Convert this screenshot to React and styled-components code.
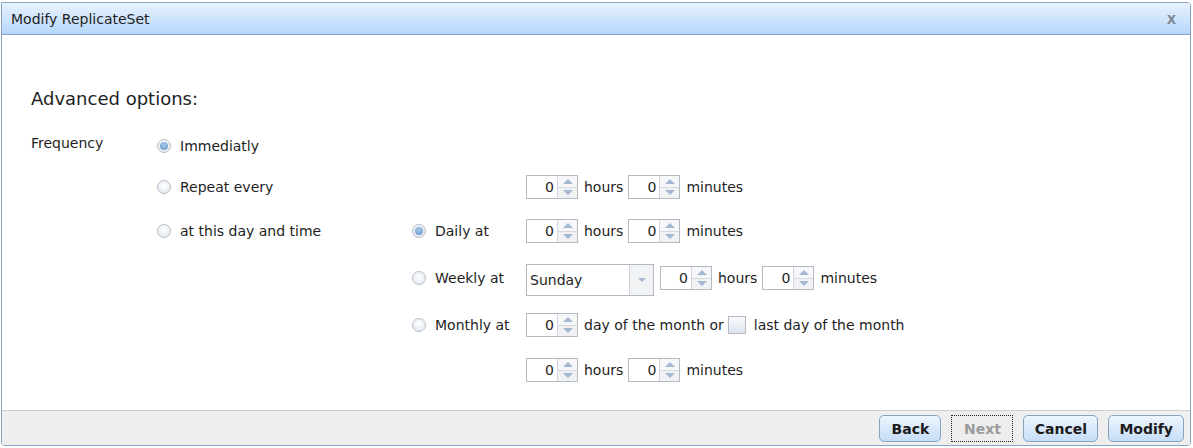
import React from 'react'
import styled, { createGlobalStyle } from 'styled-components'

const GlobalStyle = createGlobalStyle`
  html, body { margin: 0; padding: 0; background: #fff; }
  body { font-family: "DejaVu Sans", Verdana, sans-serif; color: #1e1e1e; }
`

const Page = styled.div`
  width: 1193px;
  height: 448px;
  padding: 2px 2px 0 1px;
  box-sizing: border-box;
  background: #fff;
`

const Dialog = styled.div`
  height: 444px;
  box-sizing: border-box;
  border: 1px solid #86a6c6;
  border-radius: 0 4px 4px 4px;
  display: flex;
  flex-direction: column;
  overflow: hidden;
  background: #fff;
`

const TitleBar = styled.div`
  height: 31px;
  flex: none;
  display: flex;
  align-items: center;
  justify-content: space-between;
  padding: 0 14px 0 9px;
  background: linear-gradient(#e9f3fe, #b5d6fa);
  border-bottom: 1px solid #86a6c6;
  font-size: 14px;
`

const Close = styled.span`
  font-size: 16px;
  font-weight: bold;
  color: #7d848c;
  font-family: "Liberation Sans", Arial, sans-serif;
`

const Body = styled.div`
  flex: 1;
  padding: 53px 29px 0 29px;
`

const Heading = styled.div`
  font-size: 18px;
  line-height: 22px;
  margin-bottom: 16px;
`

const Form = styled.div`
  display: grid;
  grid-template-columns: 126px 255px 114px 1fr;
  grid-template-rows: 40px 42px 46px 48px 46px 44px;
  font-size: 14px;
`

const FieldLabel = styled.div`
  grid-column: 1;
  grid-row: 1;
  align-self: start;
  padding-top: 8px;
  line-height: 18px;
`

const Choice = styled.label`
  grid-column: ${p => p.$col};
  grid-row: ${p => p.$row};
  display: flex;
  align-items: center;
  gap: 9px;
  line-height: 18px;
`

const Radio = styled.span`
  width: 14px;
  height: 14px;
  box-sizing: border-box;
  border-radius: 50%;
  border: 1px solid #b9bfc6;
  background: radial-gradient(circle at 50% 40%, #ffffff, #dde4ec);
  display: flex;
  align-items: center;
  justify-content: center;
  &::after {
    content: '';
    display: ${p => (p.$checked ? 'block' : 'none')};
    width: 8px;
    height: 8px;
    border-radius: 50%;
    background: radial-gradient(circle at 50% 35%, #a9c9ea, #5f94c8);
  }
`

const Controls = styled.div`
  grid-column: 4;
  grid-row: ${p => p.$row};
  display: flex;
  align-items: center;
  gap: 5px;
  line-height: 18px;
`

const SpinBox = styled.div`
  width: 52px;
  height: 24px;
  box-sizing: border-box;
  border: 1px solid #b5bac2;
  display: flex;
  background: #fff;
  margin-right: 1px;
`

const SpinValue = styled.div`
  flex: 1;
  text-align: right;
  padding-right: 3px;
  line-height: 22px;
`

const SpinButtons = styled.div`
  width: 19px;
  border-left: 1px solid #d2d6dc;
  display: flex;
  flex-direction: column;
`

const SpinHalf = styled.div`
  flex: 1;
  background: ${p => (p.$down ? '#f1f2f4' : '#f6f7f8')};
  border-top: ${p => (p.$down ? '1px solid #d6dae0' : 'none')};
  display: flex;
  align-items: center;
  justify-content: center;
  &::after {
    content: '';
    width: 0;
    height: 0;
    border-left: 5px solid transparent;
    border-right: 5px solid transparent;
    ${p => (p.$down ? 'border-top: 5px solid #a5b8d3;' : 'border-bottom: 5px solid #a5b8d3;')}
  }
`

const Select = styled.div`
  width: 128px;
  height: 32px;
  box-sizing: border-box;
  border: 1px solid #b5bac2;
  display: flex;
  margin-top: 4px;
  margin-right: 1px;
`

const SelectText = styled.div`
  flex: 1;
  padding-left: 3px;
  line-height: 30px;
`

const SelectArrow = styled.div`
  width: 23px;
  border-left: 1px solid #d2d6dc;
  background: #f1f2f4;
  display: flex;
  align-items: center;
  justify-content: center;
  &::after {
    content: '';
    border-left: 4px solid transparent;
    border-right: 4px solid transparent;
    border-top: 4px solid #a5b8d3;
  }
`

const Checkbox = styled.span`
  width: 18px;
  height: 18px;
  box-sizing: border-box;
  border: 1px solid #b5bac2;
  background: linear-gradient(#f7f9fb, #dde5ee);
  margin: 0 3px 0 -1px;
`

const Footer = styled.div`
  height: 35px;
  box-sizing: border-box;
  flex: none;
  background: #eeeeee;
  border-top: 1px solid #cfcfcf;
  display: flex;
  justify-content: flex-end;
  align-items: flex-start;
  padding: 4px 6px 0 0;
  gap: 10px;
`

const Button = styled.button`
  height: 27px;
  min-width: ${p => p.$w}px;
  box-sizing: border-box;
  padding: 0 10px;
  font-family: "DejaVu Sans", Verdana, sans-serif;
  font-size: 14px;
  font-weight: bold;
  color: ${p => (p.disabled ? '#9b9b9b' : '#1b1b1b')};
  border-radius: ${p => (p.disabled ? '0' : '5px')};
  border: ${p => (p.disabled ? '1px dotted #222' : '1px solid #84a4c4')};
  background: ${p => (p.disabled ? '#ededed' : 'linear-gradient(#edf5fe, #c6ddf6)')};
`

const Spinner = () => (
  <SpinBox>
    <SpinValue>0</SpinValue>
    <SpinButtons>
      <SpinHalf />
      <SpinHalf $down />
    </SpinButtons>
  </SpinBox>
)

const TimeFields = ({ row }) => (
  <Controls $row={row}>
    <Spinner />
    <span>hours</span>
    <Spinner />
    <span>minutes</span>
  </Controls>
)

export default function App() {
  return (
    <Page>
      <GlobalStyle />
      <Dialog>
        <TitleBar>
          <span>Modify ReplicateSet</span>
          <Close>x</Close>
        </TitleBar>
        <Body>
          <Heading>Advanced options:</Heading>
          <Form>
            <FieldLabel>Frequency</FieldLabel>
            <Choice $col={2} $row={1}><Radio $checked />Immediatly</Choice>
            <Choice $col={2} $row={2}><Radio />Repeat every</Choice>
            <TimeFields row={2} />
            <Choice $col={2} $row={3}><Radio />at this day and time</Choice>
            <Choice $col={3} $row={3}><Radio $checked />Daily at</Choice>
            <TimeFields row={3} />
            <Choice $col={3} $row={4}><Radio />Weekly at</Choice>
            <Controls $row={4}>
              <Select>
                <SelectText>Sunday</SelectText>
                <SelectArrow />
              </Select>
              <Spinner />
              <span>hours</span>
              <Spinner />
              <span>minutes</span>
            </Controls>
            <Choice $col={3} $row={5}><Radio />Monthly at</Choice>
            <Controls $row={5}>
              <Spinner />
              <span>day of the month or</span>
              <Checkbox />
              <span>last day of the month</span>
            </Controls>
            <TimeFields row={6} />
          </Form>
        </Body>
        <Footer>
          <Button $w={62}>Back</Button>
          <Button $w={62} disabled>Next</Button>
          <Button $w={75}>Cancel</Button>
          <Button $w={75}>Modify</Button>
        </Footer>
      </Dialog>
    </Page>
  )
}
